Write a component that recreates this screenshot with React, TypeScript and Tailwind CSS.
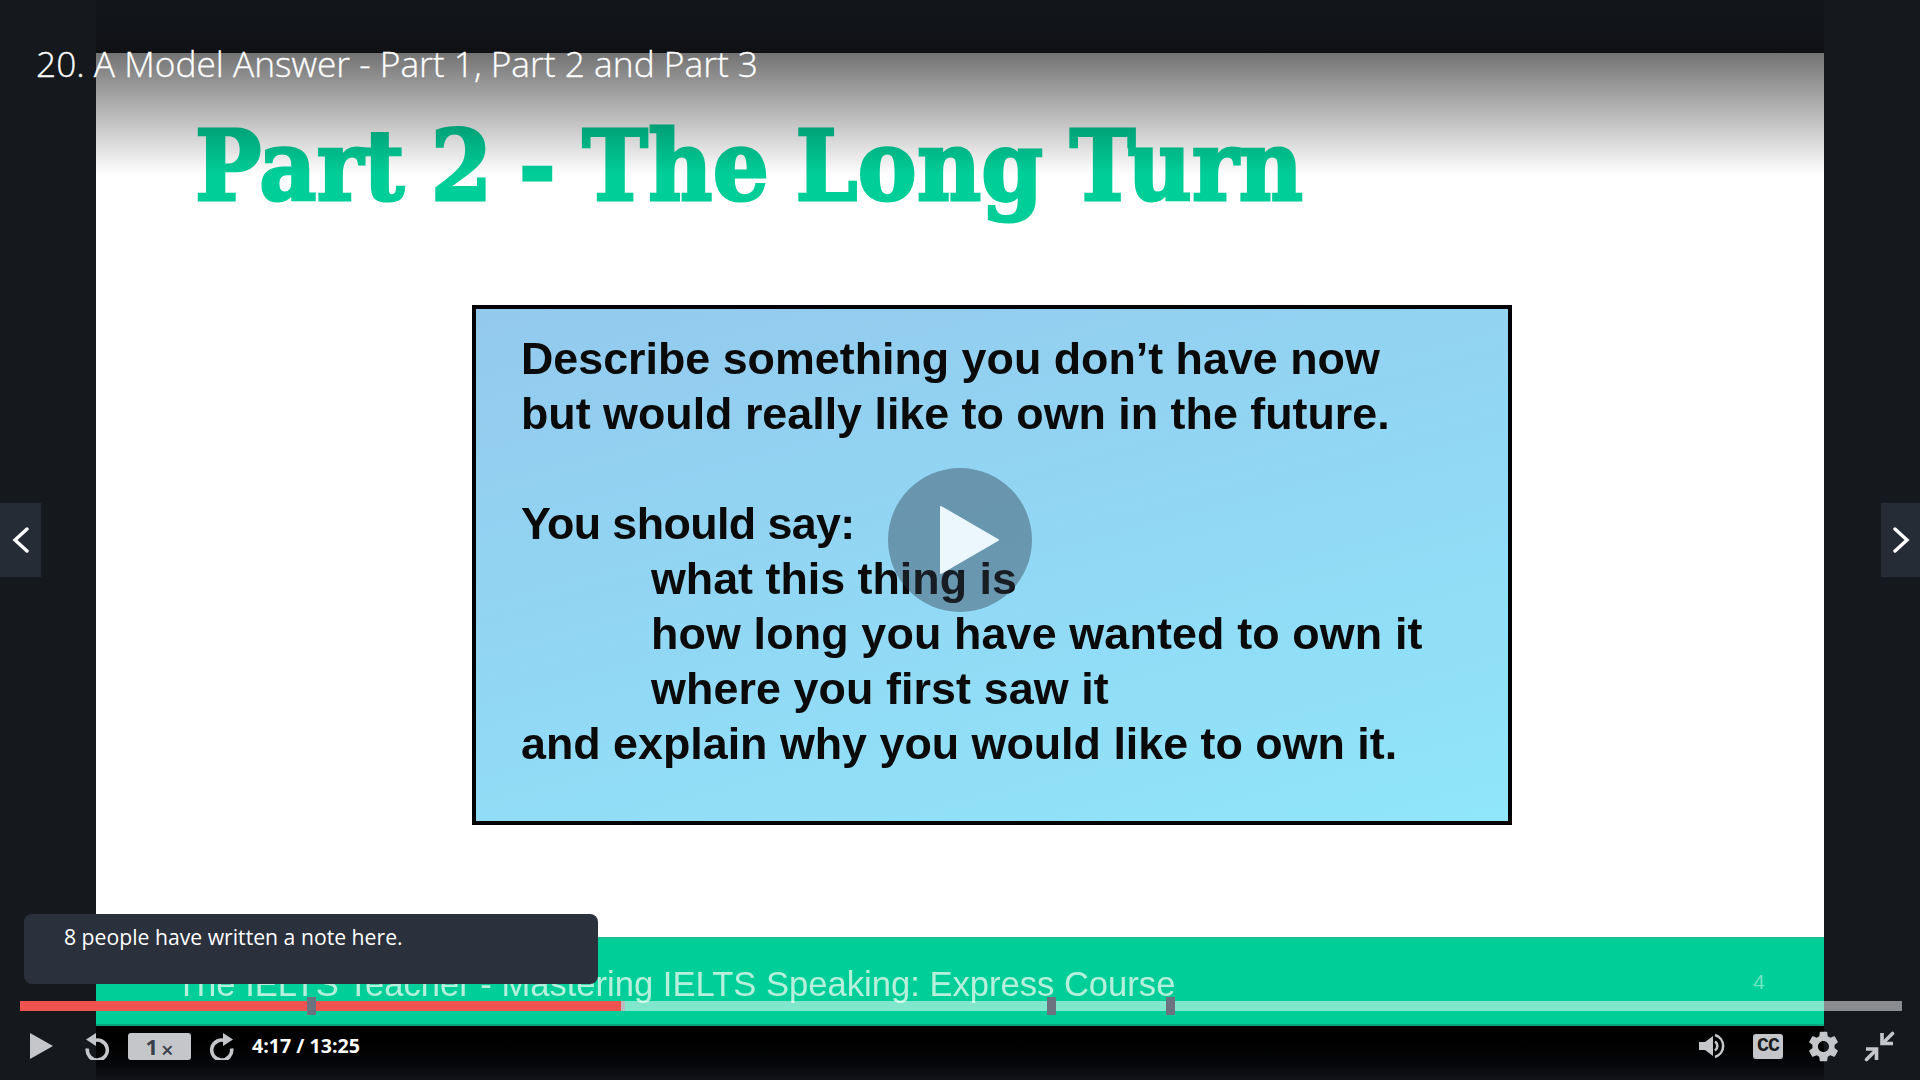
import { MdSettings } from "react-icons/md";

const openSans = "font-['Open_Sans',sans-serif]";

const Marker = ({ x }: { x: string }) => (
  <div className={`absolute top-[-4px] h-[18px] w-[9px] bg-[#6b7280] ${x}`} />
);

const Controls = () => (
  <div className="flex h-[40px] items-center text-[#c5c6c9]">
    <svg className="ml-[30px] h-[26px] w-[23px]" viewBox="0 0 23 26" fill="currentColor">
      <path d="M0 0 L23 13 L0 26 Z" />
    </svg>
    <svg className="ml-[32px] h-[27px] w-[24px]" viewBox="0 0 24 27" fill="none" stroke="currentColor" strokeWidth="3.6">
      <path d="M8 8 A10 10 0 1 1 2.4 15.5" />
      <path d="M11 0 L11 13 L1 6.5 Z" fill="currentColor" stroke="none" />
    </svg>
    <div className="ml-[19px] flex h-[27px] w-[63px] items-center justify-center rounded-[3px] bg-[#c5c6c9] text-[#3a3f4b]">
      <span className={`${openSans} text-[22px] font-bold leading-none`}>1</span>
      <span className={`${openSans} ml-[3px] mt-[5px] text-[22px] font-semibold leading-none`}>×</span>
    </div>
    <svg className="ml-[19px] h-[27px] w-[24px]" viewBox="0 0 24 27" fill="none" stroke="currentColor" strokeWidth="3.6">
      <path d="M16 8 A10 10 0 1 0 21.6 15.5" />
      <path d="M13 0 L13 13 L23 6.5 Z" fill="currentColor" stroke="none" />
    </svg>
    <span className={`${openSans} ml-[18px] text-[19.6px] font-bold text-white`}>4:17 / 13:25</span>
    <div className="ml-auto flex items-center">
      <svg className="h-[26px] w-[28px]" viewBox="0 0 28 26" fill="currentColor">
        <path d="M0 9 H6 L14 3 V23 L6 17 H0 Z" />
        <path d="M16 8.5 A5.5 5.5 0 0 1 16 17.5" fill="none" stroke="currentColor" strokeWidth="2.6" />
        <path d="M16 2 A11.5 11.5 0 0 1 16 24" fill="none" stroke="currentColor" strokeWidth="2.6" />
      </svg>
      <div className="ml-[26px] flex h-[25px] w-[30px] items-center justify-center rounded-[3px] bg-[#c5c6c9] font-['Liberation_Mono',monospace] text-[20px] font-bold tracking-[-1px] text-[#1a1c20]">
        CC
      </div>
      <MdSettings className="ml-[22px] h-[37px] w-[37px]" />
      <svg className="ml-[22px] mr-[25px] h-[31px] w-[31px]" viewBox="0 0 31 31" fill="none" stroke="currentColor" strokeWidth="3.6">
        <path d="M28.5 2.5 L20 11" strokeLinecap="round" />
        <path d="M18 2 V12.5 H29" />
        <path d="M2.5 28.5 L11 20" strokeLinecap="round" />
        <path d="M2 18 H12.5 V29" />
      </svg>
    </div>
  </div>
);

export default function App() {
  return (
    <div className="relative h-[1080px] w-[1920px] overflow-hidden bg-[#15191e]">
      {/* video frame */}
      <div className="mx-[96px] flex h-full flex-col">
        <div className="h-[53px] shrink-0 bg-gradient-to-b from-[#13161b] to-[#0f1115]" />
        <div className="relative flex flex-1 flex-col bg-white">
          <h1 className="ml-[99px] mt-[58px] origin-left scale-x-[0.9] whitespace-nowrap font-['DejaVu_Serif',serif] text-[98px] font-bold leading-[110px] tracking-[0.3px] text-[#00ce98] blur-[0.6px] [-webkit-text-stroke:3px_#00ce98] [word-spacing:-5px]">
            Part 2 - The Long Turn
          </h1>
          <div className="ml-[376px] mt-[84px] h-[520px] w-[1040px] border-4 border-black bg-[linear-gradient(165deg,#93c9ed,#90e6fb)] pl-[45px] pt-[22px] font-['Liberation_Sans',sans-serif] text-[44.8px] font-bold leading-[55px] text-[#0a0a0a]">
            <div className="blur-[0.6px]">
              <p>Describe something you don’t have now</p>
              <p>but would really like to own in the future.</p>
              <p className="mt-[55px] tracking-[-0.6px]">You should say:</p>
              <p className="pl-[130px]">what this thing is</p>
              <p className="pl-[130px] tracking-[0.15px]">how long you have wanted to own it</p>
              <p className="pl-[130px] tracking-[0.1px]">where you first saw it</p>
              <p>and explain why you would like to own it.</p>
            </div>
          </div>
          <div className="mt-auto flex h-[89px] items-start justify-between border-y-2 border-t-[#17c193] border-b-[#0aa57c] bg-[#00ce98] pl-[80px] pr-[59px] pt-[23px] font-['Liberation_Sans',sans-serif] text-[#b5f0dd]">
            <span className="text-[34.6px] leading-[44px] blur-[0.5px]">The IELTS Teacher - Mastering IELTS Speaking: Express Course</span>
            <span className="mt-[8px] text-[21px] leading-[24px] text-[#6ee5c5] blur-[0.5px]">4</span>
          </div>
          {/* top shade */}
          <div className="absolute inset-x-0 top-0 h-[122px] bg-gradient-to-b from-black/55 to-transparent" />
        </div>
        <div className="h-[54px] shrink-0 bg-gradient-to-b from-black to-[#111318]" />
      </div>

      <h2 className={`${openSans} absolute left-[36px] top-[39px] text-[35.3px] font-light leading-[48px] text-white [-webkit-text-stroke:0.3px_white]`}>
        20. A Model Answer - Part 1, Part 2 and Part 3
      </h2>

      <button className="absolute left-0 top-[503px] flex h-[74px] w-[41px] items-center justify-center bg-[#252c35]">
        <svg className="h-[26px] w-[18px]" viewBox="0 0 18 26" fill="none" stroke="white" strokeWidth="3.4" strokeLinecap="round">
          <path d="M15 2 L3 13 L15 24" />
        </svg>
      </button>
      <button className="absolute right-0 top-[503px] flex h-[74px] w-[39px] items-center justify-center bg-[#252c35]">
        <svg className="h-[26px] w-[18px]" viewBox="0 0 18 26" fill="none" stroke="white" strokeWidth="3.4" strokeLinecap="round">
          <path d="M3 2 L15 13 L3 24" />
        </svg>
      </button>

      <div className="absolute left-[888px] top-[468px] flex h-[144px] w-[144px] items-center justify-center rounded-full bg-[#2d3748]/40">
        <svg className="ml-[19px] h-[68px] w-[59px]" viewBox="0 0 59 68" fill="#ecf7fd">
          <path d="M1 1 L58 34 L1 67 Z" stroke="#ecf7fd" strokeLinejoin="round" strokeWidth="2" />
        </svg>
      </div>

      {/* player chrome */}
      <div className="absolute inset-x-0 bottom-0 pb-[14px]">
        <div className={`${openSans} ml-[24px] h-[70px] w-[574px] rounded-[8px] bg-[#2a303c] pl-[40px] pt-[8px] text-[21.2px] leading-[30px] text-white`}>
          8 people have written a note here.
        </div>
        <div className="relative ml-[20px] mr-[18px] mt-[17px] h-[10px] bg-white/50">
          <div className="flex h-full">
            <div className="w-[601px] bg-[#ef5350]" />
            <div className="w-[4px] bg-[#b9bbbd]" />
          </div>
          <Marker x="left-[287px]" />
          <Marker x="left-[1027px]" />
          <Marker x="left-[1146px]" />
        </div>
        <div className="h-[15px]" />
        <Controls />
      </div>
    </div>
  );
}
